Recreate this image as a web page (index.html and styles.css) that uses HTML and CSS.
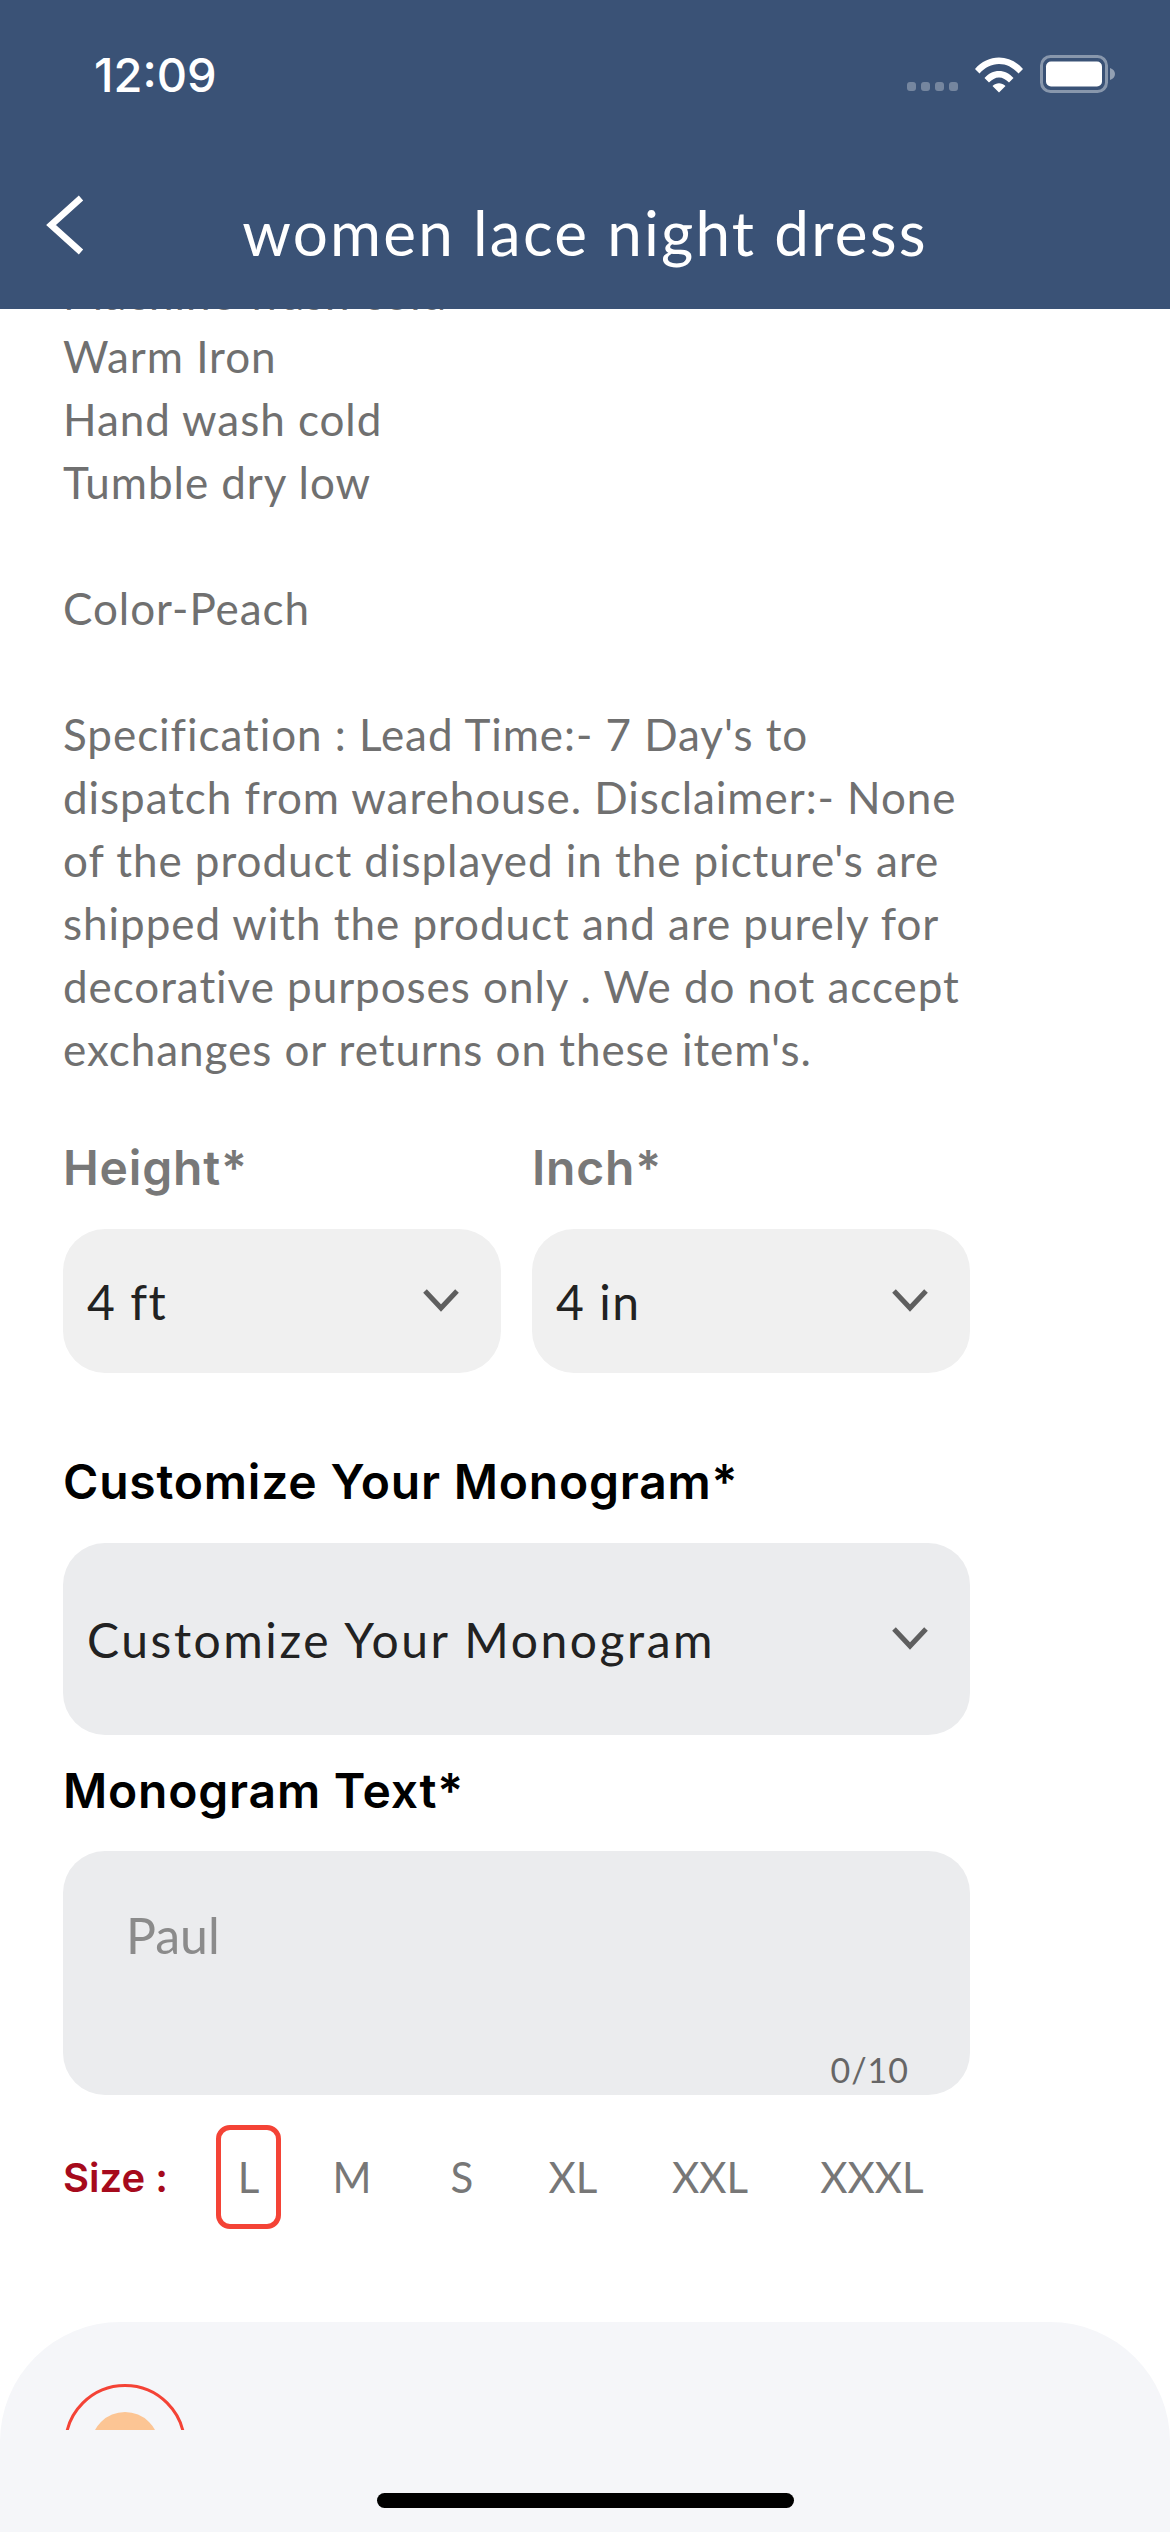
FILE: index.html
```html
<!DOCTYPE html>
<html lang="en">
<head>
<meta charset="utf-8">
<title>women lace night dress</title>
<link rel="stylesheet" href="styles.css">
</head>
<body>
<div class="screen">
  <header class="header">
    <div class="status">
      <span class="time">12:09</span>
      <div class="status-icons">
        <span class="signal"><i></i><i></i><i></i><i></i></span>
        <svg class="wifi" viewBox="0 0 48 36" width="48" height="37"><path d="M0 12.500C6.500 5 15 1 24 1s17.500 4 24 11.500l-4.500 4.500C38 11 31.500 7.500 24 7.500S10 11 4.500 17z M9.500 21.500C13.500 17 18.500 14.500 24 14.500s10.500 2.500 14.500 7L34 26c-3-3-6.300-5-10-5s-7 2-10 5z M17.500 29.500c2-1.800 4.200-2.800 6.500-2.800s4.500 1 6.500 2.800L24 36z" fill="#fff"/></svg>
        <svg class="battery" viewBox="0 0 76 38" width="76" height="38"><rect x="1.500" y="1.500" width="65" height="35" rx="9" fill="none" stroke="#fff" stroke-opacity=".4" stroke-width="3"/><rect x="6" y="6.500" width="56" height="25" rx="5" fill="#fff"/><path d="M70 13c3 1 5 3 5 6s-2 5-5 6z" fill="#fff" fill-opacity=".45"/></svg>
      </div>
    </div>
    <div class="nav">
      <svg class="back" viewBox="0 0 40 60" width="40" height="60"><path d="M36 3 6 30l30 27" fill="none" stroke="#fff" stroke-width="6.500"/></svg>
      <h1 class="title">women lace night dress</h1>
    </div>
  </header>

  <main class="content">
    <p class="desc">Machine wash cold<br>Warm Iron<br>Hand wash cold<br>Tumble dry low<br><br>Color-Peach<br><br>Specification : Lead Time:- 7 Day's to<br>dispatch from warehouse. Disclaimer:- None<br>of the product displayed in the picture's are<br>shipped with the product and are purely for<br>decorative purposes only . We do not accept<br>exchanges or returns on these item's.</p>

    <div class="pair">
      <div class="field">
        <div class="label label-grey">Height*</div>
        <div class="select select-small"><span>4 ft</span><svg class="chev" viewBox="0 0 36 24" width="36" height="24"><path d="M2 3l16 17L34 3" fill="none" stroke="#5f5f5f" stroke-width="5"/></svg></div>
      </div>
      <div class="field">
        <div class="label label-grey">Inch*</div>
        <div class="select select-small"><span>4 in</span><svg class="chev" viewBox="0 0 36 24" width="36" height="24"><path d="M2 3l16 17L34 3" fill="none" stroke="#5f5f5f" stroke-width="5"/></svg></div>
      </div>
    </div>

    <div class="label label-monogram">Customize Your Monogram*</div>
    <div class="select select-large"><span>Customize Your Monogram</span><svg class="chev" viewBox="0 0 36 24" width="36" height="24"><path d="M2 3l16 17L34 3" fill="none" stroke="#5f5f5f" stroke-width="5"/></svg></div>

    <div class="label label-text">Monogram Text*</div>
    <div class="textarea">
      <span class="placeholder">Paul</span>
      <span class="counter">0/10</span>
    </div>

    <div class="sizes">
      <span class="size-label">Size :</span>
      <span class="size size-l active">L</span>
      <span class="size size-m">M</span>
      <span class="size size-s">S</span>
      <span class="size size-xl">XL</span>
      <span class="size size-xxl">XXL</span>
      <span class="size size-xxxl">XXXL</span>
    </div>
  </main>

  <section class="sheet">
    <div class="sheet-clip">
      <div class="avatar"><div class="avatar-dot"></div></div>
    </div>
    <div class="home"></div>
  </section>
</div>
</body>
</html>
```

FILE: styles.css
```css
* { box-sizing: border-box; }
html, body { margin: 0; padding: 0; background: #fff; }
body { font-family: "Lato", "Liberation Sans", sans-serif; }
.screen { width: 1170px; height: 2532px; display: flex; flex-direction: column; overflow: hidden; position: relative; }

.header { height: 309px; background: #3a5276; color: #fff; flex: none; position: relative; z-index: 1; }
.status { height: 150px; padding: 49px 54px 0 94px; display: flex; justify-content: space-between; align-items: flex-start; }
.time { font-family: "Inter", sans-serif; font-size: 47px; font-weight: 500; line-height: 52px; }
.status-icons { display: flex; align-items: flex-end; margin-top: 6px; }
.signal { display: flex; gap: 5px; margin-right: 17px; margin-bottom: 2px; }
.signal i { width: 9px; height: 9px; border-radius: 3px; background: rgba(255,255,255,.3); }
.wifi { margin-right: 17px; }
.nav { display: flex; align-items: center; height: 159px; padding-top: 5px; position: relative; justify-content: center; }
.back { position: absolute; left: 45px; top: 45px; }
.title { margin: 0; font-size: 62px; font-weight: 400; line-height: 80px; letter-spacing: 2.200px; }

.content { flex: 1; padding: 0 63px; overflow: hidden; }
.desc { margin: -47px 0 0; font-size: 44px; line-height: 63px; color: #707070; letter-spacing: .95px; white-space: nowrap; }

.pair { display: flex; gap: 31px; width: 907px; margin-top: 60px; }
.field { flex: 1; }
.label { font-family: "Inter", sans-serif; font-size: 48px; line-height: 54px; font-weight: 600; color: #000; letter-spacing: .8px; }
.label-grey { color: #787878; margin-bottom: 34px; }
.label-monogram { margin-top: 82px; margin-bottom: 34px; }
.label-text { margin-top: 29px; margin-bottom: 33px; }

.select { display: flex; justify-content: space-between; align-items: center; font-size: 48px; color: #222; }
.select-small { height: 144px; border-radius: 42px; background: #f0f0f0; padding: 0 42px 0 24px; letter-spacing: 1.500px; }
.select-large { width: 907px; height: 192px; border-radius: 42px; background: #ebecee; padding: 0 42px 0 24px; letter-spacing: 2.560px; }
.chev { margin-top: -2px; }

.textarea { width: 907px; height: 244px; border-radius: 42px; background: #ebecee; position: relative; padding: 56px 63px; }
.placeholder { font-size: 50px; line-height: 56px; color: #8b8b8b; display: block; }
.counter { position: absolute; right: 61px; bottom: 3px; font-size: 34px; color: #666; line-height: 44px; letter-spacing: 1px; }

.sizes { display: flex; align-items: center; width: 907px; height: 104px; margin-top: 30px; font-size: 42px; color: #777; }
.size-label { font-family: "Inter", sans-serif; font-weight: 600; color: #a60a1c; font-size: 40px; width: 153px; white-space: nowrap; }
.size { display: flex; align-items: center; justify-content: center; height: 104px; }
.size-l { width: 65px; }
.size-m { width: 100px; margin-left: 21px; }
.size-s { width: 60px; margin-left: 30px; }
.size-xl { width: 70px; margin-left: 46px; }
.size-xxl { width: 100px; margin-left: 52px; }
.size-xxxl { width: 120px; margin-left: 52px; }
.active { border: 5px solid #f44336; border-radius: 14px; }

.sheet { flex: none; height: 210px; background: #f5f6f9; border-radius: 120px 120px 0 0; display: flex; flex-direction: column; }
.sheet-clip { height: 108px; overflow: hidden; padding: 62px 0 0 64px; }
.avatar { width: 122px; height: 122px; border: 3px solid #f44336; border-radius: 50%; display: flex; justify-content: center; padding-top: 25px; }
.avatar-dot { width: 68px; height: 68px; border-radius: 50%; background: #fcc594; }
.home { width: 417px; height: 15px; background: #000; border-radius: 8px; margin: 63px auto 0; }
```
